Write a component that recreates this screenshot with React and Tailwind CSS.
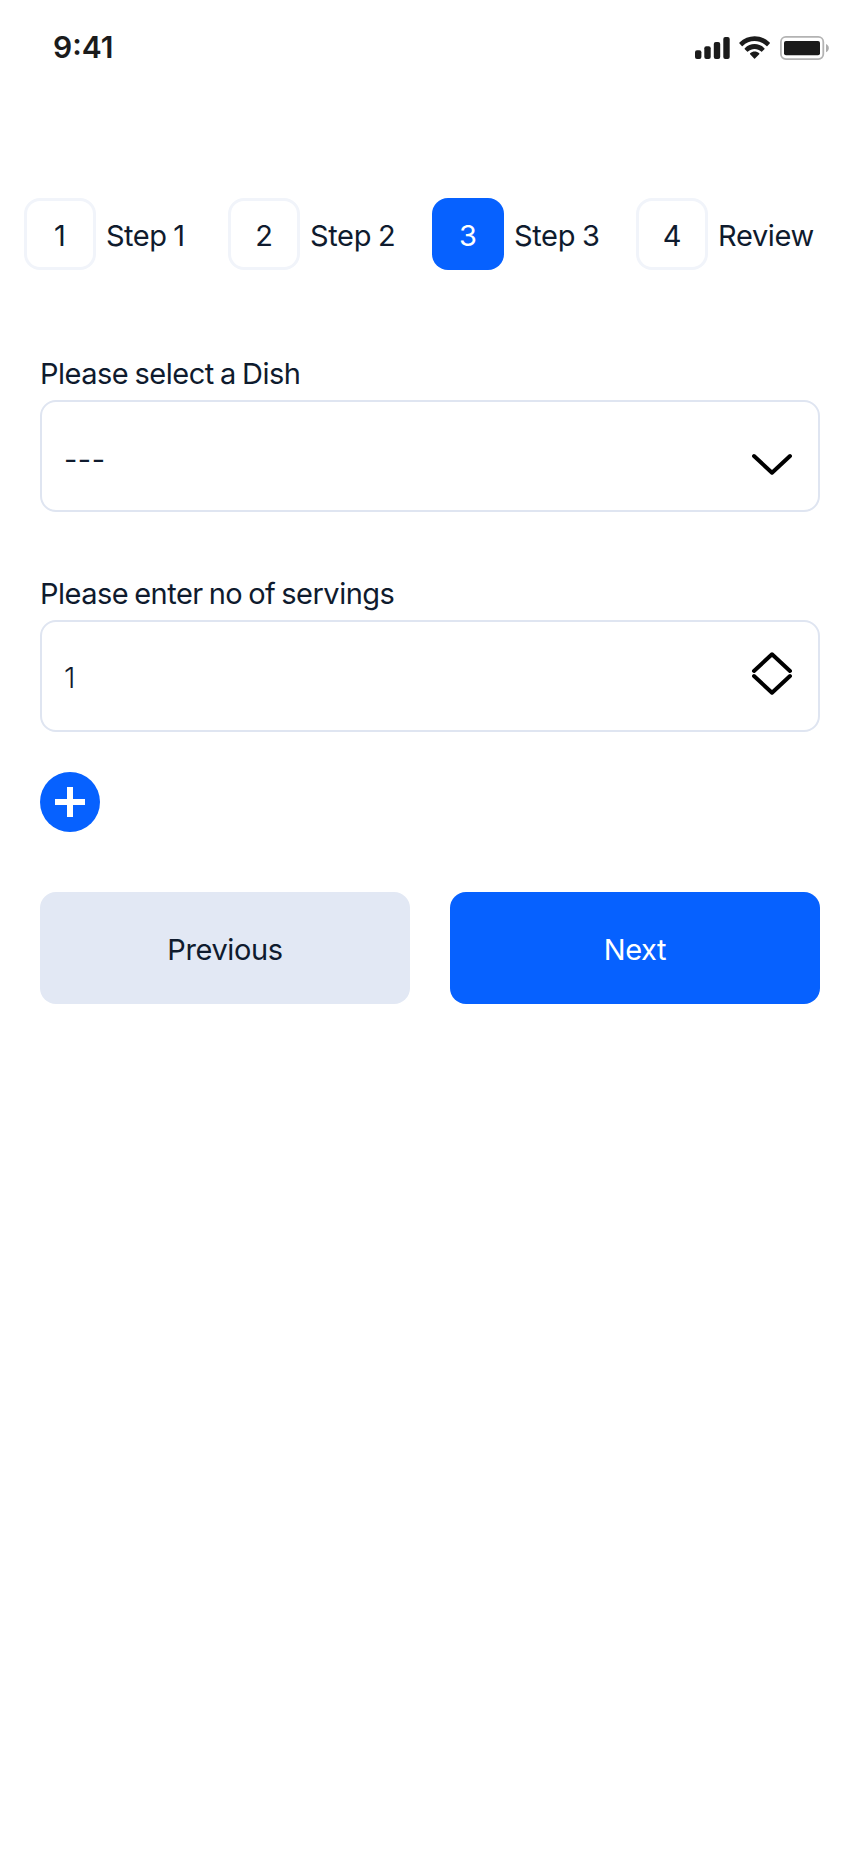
import React from 'react';

const steps = [
  { n: '1', label: 'Step 1', text: 'tracking-[-0.5px] [word-spacing:-1px]' },
  { n: '2', label: 'Step 2', text: 'tracking-[-0.35px] [word-spacing:-1px]' },
  { n: '3', label: 'Step 3', text: 'tracking-[-0.35px] [word-spacing:-1px]', active: true },
  { n: '4', label: 'Review', text: 'tracking-[-0.35px]' },
];

function StatusBar() {
  return (
    <header className="flex h-24 items-center justify-between pl-[53px] pr-[30px] text-[#1b1b1b]">
      <span className="pb-0.5 text-[30px] leading-9 font-semibold tracking-[0px]">9:41</span>
      <svg width="136" height="28" viewBox="694 34 136 28" fill="#1b1b1b">
        <rect x="695" y="50.3" width="6.4" height="8.7" rx="2" />
        <rect x="704.3" y="46.3" width="6.4" height="12.7" rx="2" />
        <rect x="713.8" y="42" width="6.4" height="17" rx="2" />
        <rect x="723.3" y="37" width="6.4" height="22" rx="2" />
        <path
          transform="translate(739.3 36.1) scale(1.8 1.88)"
          d="M8.5 2.59c2.47 0 4.84.95 6.63 2.65.13.13.35.13.49 0l1.28-1.3c.07-.07.11-.16.11-.25 0-.1-.04-.19-.11-.26-4.69-4.48-12.11-4.48-16.8 0-.07.07-.11.16-.11.26s.04.19.11.25l1.29 1.3c.13.13.35.13.49 0C3.66 3.54 6.03 2.59 8.5 2.59zM8.5 6.82c1.36 0 2.67.5 3.67 1.41.14.13.35.13.49 0l1.28-1.3c.14-.14.14-.37 0-.51-3.06-2.92-7.82-2.92-10.89 0-.14.14-.14.37 0 .51l1.28 1.3c.14.13.35.13.49 0C5.83 7.32 7.14 6.82 8.5 6.82zM11.07 9.67c.14-.14.14-.37-.01-.51-1.45-1.23-3.58-1.23-5.03 0-.15.13-.15.36-.01.51l2.22 2.25c.13.14.35.14.48 0z"
        />
        <rect x="780.9" y="36.9" width="42.4" height="22.2" rx="5" fill="none" stroke="#b3b3b3" strokeWidth="1.8" />
        <rect x="784" y="41" width="36" height="14.2" rx="2" />
        <path d="M826 44c3.8 1.4 3.8 6.8 0 8.2z" fill="#adadad" />
      </svg>
    </header>
  );
}

function Field({ label, labelClass, value, valueClass, children }) {
  return (
    <div className="flex flex-col">
      <label className={`mb-2 h-9 text-[29px] leading-9 whitespace-nowrap ${labelClass}`}>{label}</label>
      <div className="flex h-28 items-center justify-between rounded-2xl border-2 border-[#dfe5f1] px-[22px]">
        <span className={`text-[29px] leading-9 ${valueClass}`}>{value}</span>
        {children}
      </div>
    </div>
  );
}

export default function App() {
  return (
    <div className="flex min-h-[1864px] w-[860px] flex-col bg-white font-['Inter',sans-serif] text-[#0f1b2e]">
      <StatusBar />

      <nav className="mt-[102px] flex pl-6">
        {steps.map((s) => (
          <div key={s.n} className="flex w-[204px] shrink-0 items-center gap-2.5 last:w-[190px]">
            <div
              className={`flex size-[72px] items-center justify-center rounded-2xl pt-1 text-[29px] leading-9 ${
                s.active ? 'bg-[#0661ff] text-white' : 'border-3 border-[#f1f4fa]'
              }`}
            >
              {s.n}
            </div>
            <span className={`pt-1 text-[29px] leading-9 whitespace-nowrap ${s.text}`}>{s.label}</span>
          </div>
        ))}
      </nav>

      <main className="mt-[86px] flex flex-col px-10">
        <Field
          label="Please select a Dish"
          labelClass="tracking-[-0.5px] [word-spacing:-1.4px]"
          value="---"
          valueClass="pt-[7px] tracking-[0.5px]"
        >
          <svg className="mb-1" width="48" height="48" viewBox="748 650 48 48" fill="none" stroke="#000" strokeWidth="4" strokeLinecap="round" strokeLinejoin="round">
            <path d="M754 676l18 16.7 18-16.7" />
          </svg>
        </Field>
        <div className="h-16" />
        <Field
          label="Please enter no of servings"
          labelClass="tracking-[-0.5px] [word-spacing:-1.7px]"
          value="1"
          valueClass="pt-1 font-light"
        >
          <svg className="mb-1" width="48" height="48" viewBox="748 650 48 48" fill="none" stroke="#000" strokeWidth="4" strokeLinecap="round" strokeLinejoin="round">
            <path d="M754 671l18-16.7 18 16.7M754 676l18 16.7 18-16.7" />
          </svg>
        </Field>

        <button className="mt-10 flex size-[60px] items-center justify-center rounded-full bg-[#0661ff]" aria-label="Add dish">
          <svg width="30" height="30" viewBox="0 0 30 30" fill="#fff">
            <path d="M12 0h6v12h12v6H18v12h-6V18H0v-6h12z" />
          </svg>
        </button>

        <div className="mt-[60px] grid grid-cols-2 gap-10">
          <button className="h-28 rounded-2xl bg-[#e2e8f4] pt-1 text-[29px] leading-9 tracking-[-0.4px]">Previous</button>
          <button className="h-28 rounded-2xl bg-[#0661ff] pt-1 text-[29px] leading-9 tracking-[-0.4px] text-white">Next</button>
        </div>
      </main>
    </div>
  );
}
